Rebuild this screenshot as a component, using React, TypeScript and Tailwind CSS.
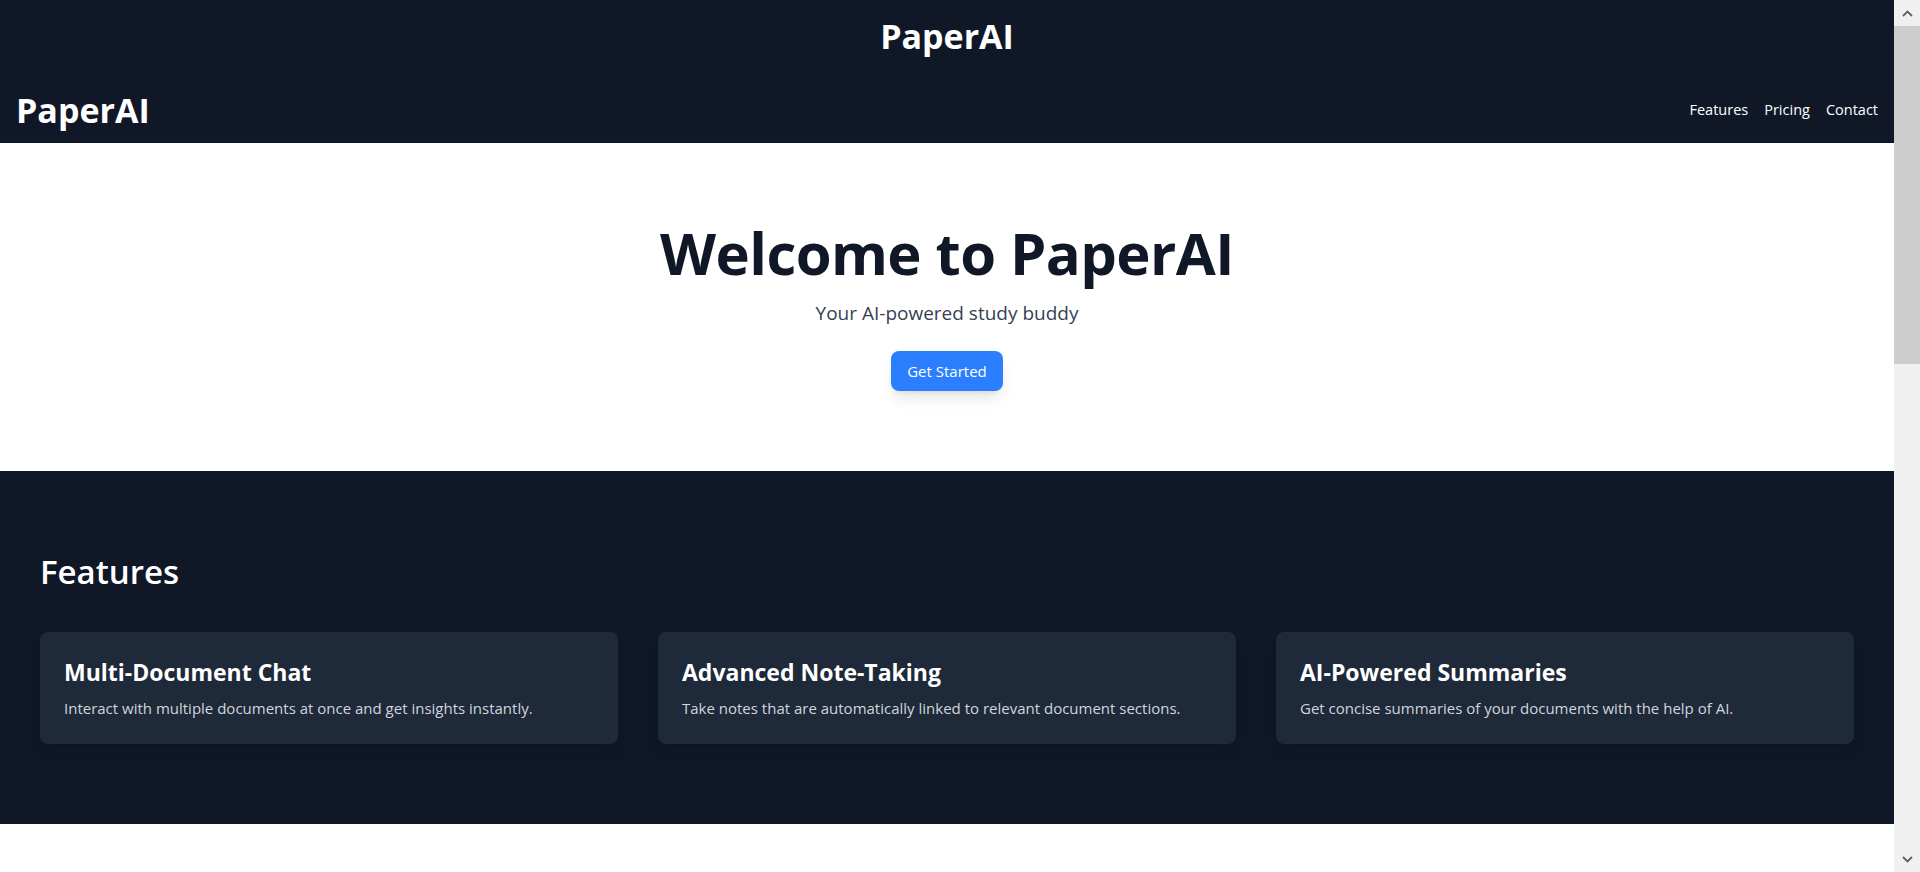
import React from "react";

const features = [
  {
    title: "Multi-Document Chat",
    desc: "Interact with multiple documents at once and get insights instantly.",
  },
  {
    title: "Advanced Note-Taking",
    desc: "Take notes that are automatically linked to relevant document sections.",
  },
  {
    title: "AI-Powered Summaries",
    desc: "Get concise summaries of your documents with the help of AI.",
  },
];

function ScrollRail() {
  return (
    <div className="flex w-[26px] shrink-0 flex-col bg-[#f0f0f0]" aria-hidden="true">
      <div className="flex h-[26px] items-center justify-center">
        <svg width="11" height="7" viewBox="0 0 11 7">
          <path d="M1 6 L5.5 1.5 L10 6" fill="none" stroke="#606060" strokeWidth="1.8" />
        </svg>
      </div>
      <div className="h-[338px] bg-[#cdcdcd]" />
      <div className="flex-1" />
      <div className="flex h-[26px] items-center justify-center">
        <svg width="11" height="7" viewBox="0 0 11 7">
          <path d="M1 1 L5.5 5.5 L10 1" fill="none" stroke="#606060" strokeWidth="1.8" />
        </svg>
      </div>
    </div>
  );
}

export default function App() {
  return (
    <div className="flex h-screen bg-white font-['Open_Sans',sans-serif]">
      <div className="min-w-0 flex-1 overflow-y-auto [scrollbar-width:none]">
        <header className="bg-gray-900 text-white">
          <h1 className="pt-4 text-center text-[34px] font-bold leading-10">PaperAI</h1>
          <nav className="flex items-center justify-between px-4 pt-[34px] pb-[13px]">
            <div className="text-[34px] font-bold leading-10">PaperAI</div>
            <ul className="flex items-center gap-4 text-[14.5px]">
              <li><a href="#features">Features</a></li>
              <li><a href="#pricing">Pricing</a></li>
              <li><a href="#contact">Contact</a></li>
            </ul>
          </nav>
        </header>

        <section className="pt-20 pb-20 text-center">
          <h2 className="text-[58px] font-bold leading-[60px] tracking-[-0.01em] text-gray-900">Welcome to PaperAI</h2>
          <p className="mt-4 text-[19px] leading-7 text-gray-700">Your AI-powered study buddy</p>
          <button className="mt-6 h-10 rounded-lg bg-blue-500 px-4 text-[15px] text-white shadow-lg">Get Started</button>
        </section>

        <section id="features" className="bg-gray-900 px-10 pt-[81px] pb-20 text-white">
          <h2 className="text-[33px] font-semibold leading-10">Features</h2>
          <div className="mt-10 grid grid-cols-3 gap-10">
            {features.map((f) => (
              <div key={f.title} className="rounded-lg bg-gray-800 p-6 shadow-lg">
                <h3 className="text-[23px] font-bold leading-8">{f.title}</h3>
                <p className="mt-2 text-[15px] leading-6 text-gray-300">{f.desc}</p>
              </div>
            ))}
          </div>
        </section>

        <section id="pricing" className="h-[700px] bg-white px-10 py-20" />
        <section id="contact" className="h-[650px] bg-white px-10 py-20" />
      </div>
      <ScrollRail />
    </div>
  );
}
